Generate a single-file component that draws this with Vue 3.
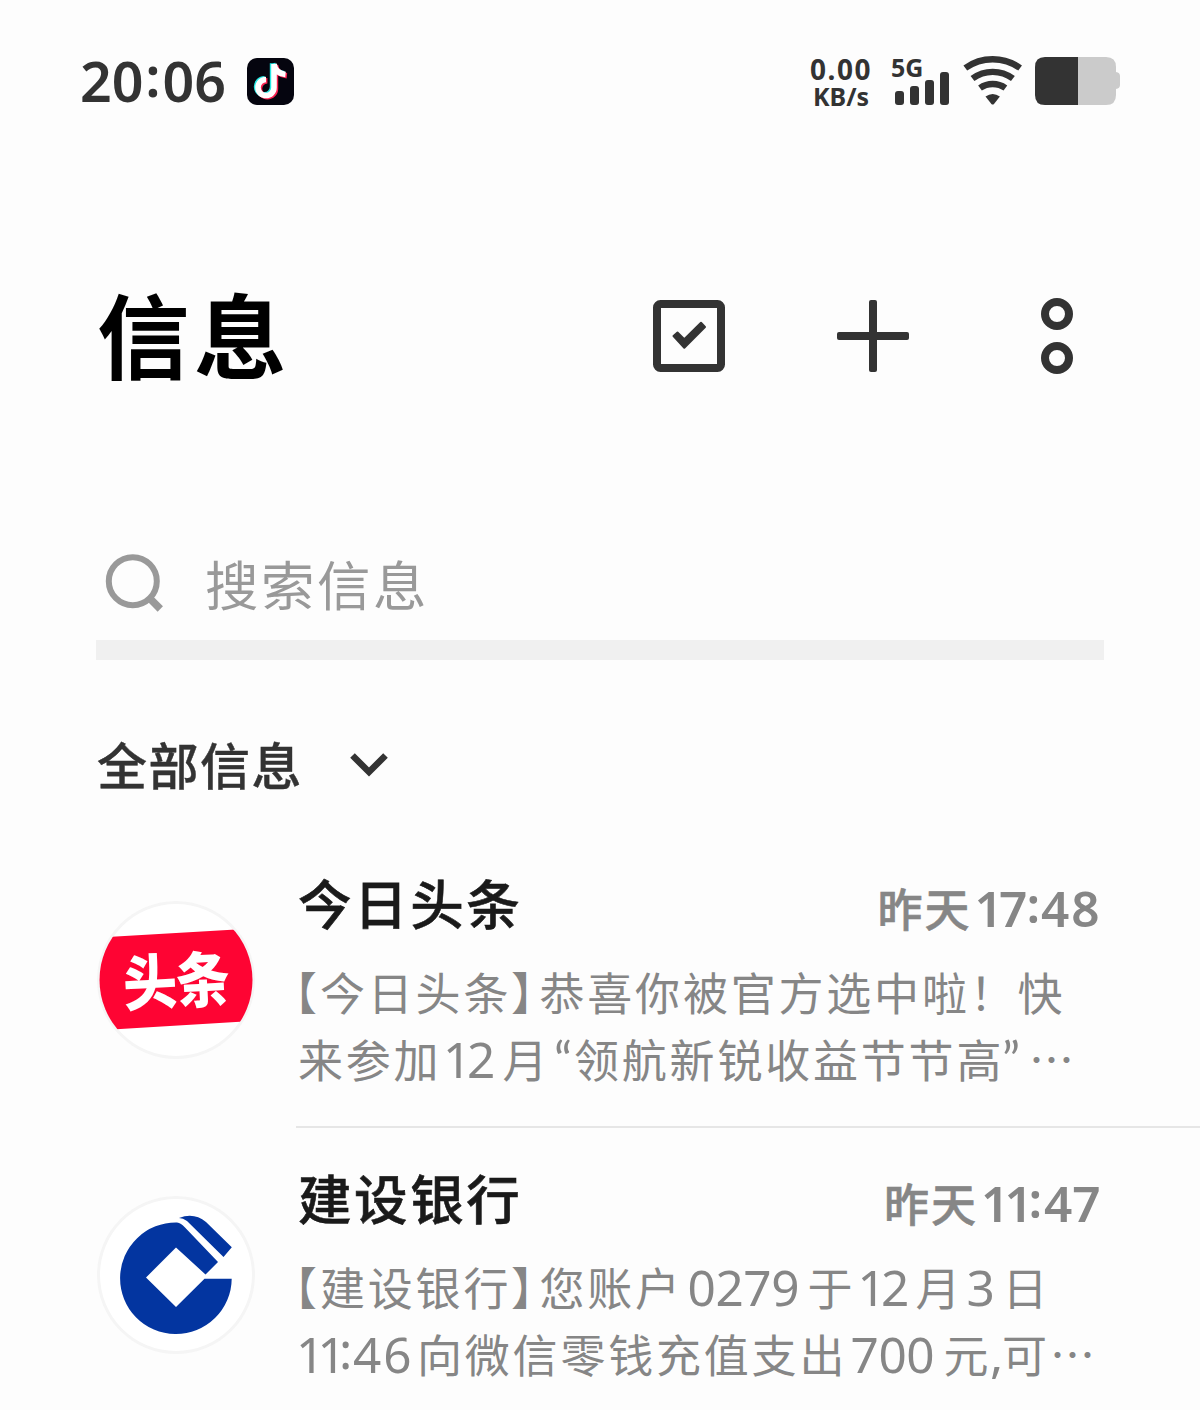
<script setup>
const bars = [14, 19, 25, 33]

// each line is split in runs, w is the advance of the run in px
const messages = [
    {
        id: 'toutiao',
        name: '今日头条',
        day: '昨天',
        time: [{ t: '1', w: 24.5, c: 'one' }, { t: '7', w: 27.5 }, { t: ':', w: 14.5, c: 'colon' }, { t: '48', w: 60, c: 'wide' }],
        lines: [
            [
                { t: '【', w: 22, c: 'open' },
                { t: '今日头条', w: 191 },
                { t: '】', w: 28.5, c: 'close' },
                { t: '恭喜你被官方选中啦！快', w: 530 }
            ],
            [
                { t: '来参加', w: 145 },
                { t: '1', w: 24, c: 'num one' },
                { t: '2', w: 35.5, c: 'num' },
                { t: '月', w: 51.5 },
                { t: '“', w: 20, c: 'num quote' },
                { t: '领航新锐收益节节高', w: 428 },
                { t: '”', w: 27, c: 'num quote' },
                { t: '…', w: 48 }
            ]
        ]
    },
    {
        id: 'ccb',
        name: '建设银行',
        day: '昨天',
        time: [{ t: '1', w: 23.5, c: 'one' }, { t: '1', w: 24, c: 'one' }, { t: ':', w: 15.5, c: 'colon' }, { t: '47', w: 57 }],
        lines: [
            [
                { t: '【', w: 22, c: 'open' },
                { t: '建设银行', w: 191 },
                { t: '】', w: 28.5, c: 'close' },
                { t: '您账户', w: 148 },
                { t: '0279', w: 120, c: 'num' },
                { t: '于', w: 50 },
                { t: '1', w: 23.5, c: 'num one' },
                { t: '2', w: 34.5, c: 'num' },
                { t: '月', w: 51 },
                { t: '3', w: 36, c: 'num' },
                { t: '日', w: 48 }
            ],
            [
                { t: '1', w: 21.5, c: 'num one lead' },
                { t: '1', w: 21.5, c: 'num one' },
                { t: ':', w: 14, c: 'num colon' },
                { t: '46', w: 64, c: 'num wide' },
                { t: '向微信零钱充值支出', w: 433.5 },
                { t: '700', w: 93, c: 'num' },
                { t: '元', w: 46.5 },
                { t: ',', w: 12, c: 'num' },
                { t: '可', w: 48 },
                { t: '…', w: 48 }
            ]
        ]
    }
]
</script>

<template>
    <div class="page">
        <header class="status">
            <div class="clock">20<span class="clock-colon">:</span>06</div>
            <svg class="tiktok" viewBox="0 0 47 47">
                <rect width="47" height="47" rx="10" fill="#05050f" />
                <g fill="none" stroke-width="5.6">
                    <path transform="translate(-1.4 -0.8)" stroke="#25e8e4" d="M27 6V29.5A8 8 0 1 1 19 21.5M27 6Q28.5 15.5 38.5 16.5" />
                    <path transform="translate(1.4 1.2)" stroke="#fb2453" d="M27 6V29.5A8 8 0 1 1 19 21.5M27 6Q28.5 15.5 38.5 16.5" />
                    <path stroke="#fff" d="M27 6V29.5A8 8 0 1 1 19 21.5M27 6Q28.5 15.5 38.5 16.5" />
                </g>
            </svg>
            <div class="speed">
                <span class="speed-num">0.00</span>
                <span class="speed-unit">KB/s</span>
            </div>
            <div class="signal">
                <span class="net">5G</span>
                <i v-for="h in bars" :key="h" class="bar" :style="{ height: h + 'px' }"></i>
            </div>
            <svg class="wifi" viewBox="0 0 60 52">
                <g fill="none" stroke="#333" stroke-width="6.4">
                    <path d="M3.3 13A47 47 0 0 1 58.1 13" />
                    <path d="M10.5 23.5A34 34 0 0 1 50.9 23.5" />
                    <path d="M18 33A22 22 0 0 1 43.4 33" />
                </g>
                <path fill="#333" d="M23.5 41.5Q30.7 36.4 37.9 41.5L32 48.9Q30.7 50.2 29.4 48.9Z" />
            </svg>
            <svg class="battery" viewBox="0 0 85 48">
                <path fill="#cbcbcb" d="M43 0H71Q81 0 81 10V15Q85 15.5 85 19V28Q85 31.5 81 32V38Q81 48 71 48H43Z" />
                <path fill="#333" d="M10 0H43V48H10Q0 48 0 38V10Q0 0 10 0Z" />
            </svg>
        </header>

        <div class="titlebar">
            <h1>信息</h1>
            <svg class="action" viewBox="0 0 72 72">
                <rect x="4" y="4" width="64" height="64" rx="3.5" fill="none" stroke="#333" stroke-width="8" />
                <path d="M20.5 36L24.5 32.5L31.3 39.2L48 22.8L52 27L31.3 47.7Z" fill="#333" stroke="#333" stroke-width="2" stroke-linejoin="round" />
            </svg>
            <svg class="action" viewBox="0 0 72 72">
                <g fill="#333">
                    <rect x="32" y="0" width="8" height="72" rx="2" />
                    <rect x="0" y="32" width="72" height="8" rx="2" />
                </g>
            </svg>
            <svg class="more" viewBox="0 0 32 76">
                <g fill="none" stroke="#333" stroke-width="8">
                    <circle cx="16" cy="16" r="12" />
                    <circle cx="16" cy="60" r="12" />
                </g>
            </svg>
        </div>

        <div class="search">
            <svg class="search-icon" viewBox="0 0 60 60">
                <g fill="none" stroke="#999">
                    <circle cx="27.8" cy="27.2" r="24" stroke-width="6" />
                    <path d="M44 43.7L55.3 55" stroke-width="7.5" />
                </g>
            </svg>
            <span>搜索信息</span>
        </div>

        <div class="filter">
            <span>全部信息</span>
            <svg class="arrow" viewBox="0 0 38 26">
                <path d="M2.5 4.5L19 21L35.5 4.5" fill="none" stroke="#333" stroke-width="6.5" />
            </svg>
        </div>

        <ul class="list">
            <li v-for="m in messages" :key="m.id" class="item">
                <div class="avatar">
                    <svg v-if="m.id === 'toutiao'" viewBox="0 0 158 158">
                        <clipPath id="face"><circle cx="79" cy="79" r="76.5" /></clipPath>
                        <path clip-path="url(#face)" fill="#fe0433" d="M0 36.7L158 27.5V119.8L0 129.5Z" />
                        <text transform="translate(79 79) rotate(-3) scale(1 1.12)" x="-53" y="21" textLength="107" class="logo-text">头条</text>
                    </svg>
                    <svg v-else viewBox="0 0 158 158">
                        <g fill="#0335a0">
                            <path d="M107.5 82.7H134.7A55.8 55.8 0 1 1 80 26.5Q84 26.8 88 31.5L121 66L108.5 78.5L79 51.5L49 81.5L79 111Z" />
                            <path d="M82 22Q97 16 109 26L134.8 51.3L126.5 61L90 25Q86 22 82 22Z" />
                        </g>
                    </svg>
                </div>
                <div class="content">
                    <div class="head">
                        <h2>{{ m.name }}</h2>
                        <div class="time">
                            <span class="day">{{ m.day }}</span>
                            <span v-for="(s, i) in m.time" :key="i" :class="['run', s.c]" :style="{ width: s.w + 'px' }">{{ s.t }}</span>
                        </div>
                    </div>
                    <p v-for="(line, i) in m.lines" :key="i" class="line">
                        <span v-for="(s, j) in line" :key="j" :class="['run', s.c]" :style="{ width: s.w + 'px' }">{{ s.t }}</span>
                    </p>
                </div>
            </li>
        </ul>
    </div>
</template>

<style>
body {
    margin: 0;
    background: #fdfdfd;
}
</style>

<style scoped>
.page {
    width: 1200px;
    height: 1410px;
    overflow: hidden;
    box-sizing: border-box;
    background: #fdfdfd;
    color: #333;
    font-family: "Noto Sans CJK SC", sans-serif;
}

h1, h2, p, ul {
    margin: 0;
    padding: 0;
}

svg {
    display: block;
    flex: none;
}

/* status bar */
.status {
    display: flex;
    align-items: center;
    height: 48px;
    padding: 57px 80px 0 80px;
    font-family: "Noto Sans", sans-serif;
}

.clock {
    width: 167px;
    font-size: 55.5px;
    line-height: 48px;
    font-weight: 600;
    white-space: nowrap;
}

.clock-colon {
    position: relative;
    top: -5px;
    display: inline-block;
    width: 19px;
    text-align: center;
}

.tiktok {
    width: 47px;
    height: 47px;
}

.speed {
    display: flex;
    flex-direction: column;
    align-items: center;
    width: 64px;
    margin-left: 515px;
    padding-top: 3px;
    font-weight: 700;
    white-space: nowrap;
}

.speed-num {
    font-size: 28px;
    line-height: 28px;
    letter-spacing: 1.5px;
}

.speed-unit {
    font-size: 25px;
    line-height: 27px;
}

.signal {
    position: relative;
    display: flex;
    align-items: flex-end;
    gap: 6px;
    width: 54px;
    height: 48px;
    margin-left: 22px;
}

.net {
    position: absolute;
    left: -4px;
    top: -2px;
    font-size: 25px;
    line-height: 24px;
    font-weight: 700;
}

.bar {
    width: 9px;
    border-radius: 3px;
    background: #333;
}

.wifi {
    width: 60px;
    height: 52px;
    margin-left: 13px;
}

.battery {
    width: 85px;
    height: 48px;
    margin-left: 13px;
}

/* title */
.titlebar {
    display: flex;
    align-items: center;
    height: 120px;
    margin-top: 171px;
    padding: 0 127px 0 97px;
}

h1 {
    flex: 1;
    padding-bottom: 8px;
    color: #000;
    font-size: 92.5px;
    line-height: 112px;
    font-weight: 700;
    letter-spacing: 4.5px;
}

.action {
    width: 72px;
    height: 72px;
    margin-right: 112px;
}

.action + .action {
    margin-right: 132px;
}

.more {
    width: 32px;
    height: 76px;
}

.search {
    display: flex;
    align-items: center;
    height: 112px;
    margin: 132px 96px 0;
    border-bottom: 20px solid #f0f0f0;
    color: #999;
    font-size: 53.5px;
    line-height: 80px;
    letter-spacing: 2.5px;
}

.search span {
    padding-bottom: 3px;
}

.search-icon {
    width: 60px;
    height: 60px;
    margin: 0 40px 0 9px;
}

.filter {
    display: flex;
    align-items: center;
    height: 80px;
    margin: 64px 0 0 97px;
    font-size: 50px;
    line-height: 76px;
    font-weight: 500;
    letter-spacing: 1.5px;
    -webkit-text-stroke: 0.4px #333;
}

.filter span {
    padding-bottom: 3px;
}

.arrow {
    width: 38px;
    height: 26px;
    margin-left: 47px;
}

/* message list */
.list {
    margin-top: 29px;
    list-style: none;
}

.item {
    display: flex;
    height: 295px;
}

.avatar {
    flex: none;
    width: 158px;
    height: 158px;
    margin: 68px 41px 0 97px;
    border-radius: 50%;
    box-shadow: inset 0 0 0 3px #f5f5f5;
    background: #fff;
}

.logo-text {
    fill: #fff;
    font-size: 54px;
    font-weight: 900;
}

.content {
    flex: 1;
    padding: 37px 99px 0 2px;
    box-sizing: border-box;
    border-bottom: 2px solid #e6e6e6;
}

.head {
    display: flex;
    justify-content: space-between;
    height: 88px;
}

h2 {
    color: #1a1a1a;
    font-size: 53.5px;
    line-height: 64px;
    font-weight: 500;
    letter-spacing: 2.6px;
    -webkit-text-stroke: 0.6px #1a1a1a;
}

.time {
    display: flex;
    align-items: baseline;
    color: #868686;
    font-family: "Noto Sans", sans-serif;
    font-size: 49.5px;
    line-height: 76px;
    font-weight: 600;
}

.day {
    width: 97px;
    font-family: "Noto Sans CJK SC", sans-serif;
    font-size: 45px;
    font-weight: 500;
    letter-spacing: 2px;
    -webkit-text-stroke: 0.6px #868686;
}

.line {
    display: flex;
    align-items: baseline;
    height: 67px;
    color: #868686;
    font-size: 45px;
    line-height: 67px;
    letter-spacing: 2.8px;
    white-space: nowrap;
}

.run {
    flex: none;
    white-space: nowrap;
}

.num {
    font-family: "Noto Sans", sans-serif;
    font-size: 49.5px;
    letter-spacing: -0.4px;
}

.one {
    letter-spacing: -6.5px;
}

.wide {
    letter-spacing: 2px;
}

.lead {
    margin-left: -2px;
}

.colon {
    position: relative;
    top: -4px;
    letter-spacing: 0;
}

.quote {
    font-family: Lato, sans-serif;
    letter-spacing: 0;
}

/* half width brackets */
.open,
.close {
    letter-spacing: 0;
    font-feature-settings: "halt";
}

.open {
    display: flex;
    justify-content: flex-end;
    position: relative;
    left: -3px;
}
</style>
